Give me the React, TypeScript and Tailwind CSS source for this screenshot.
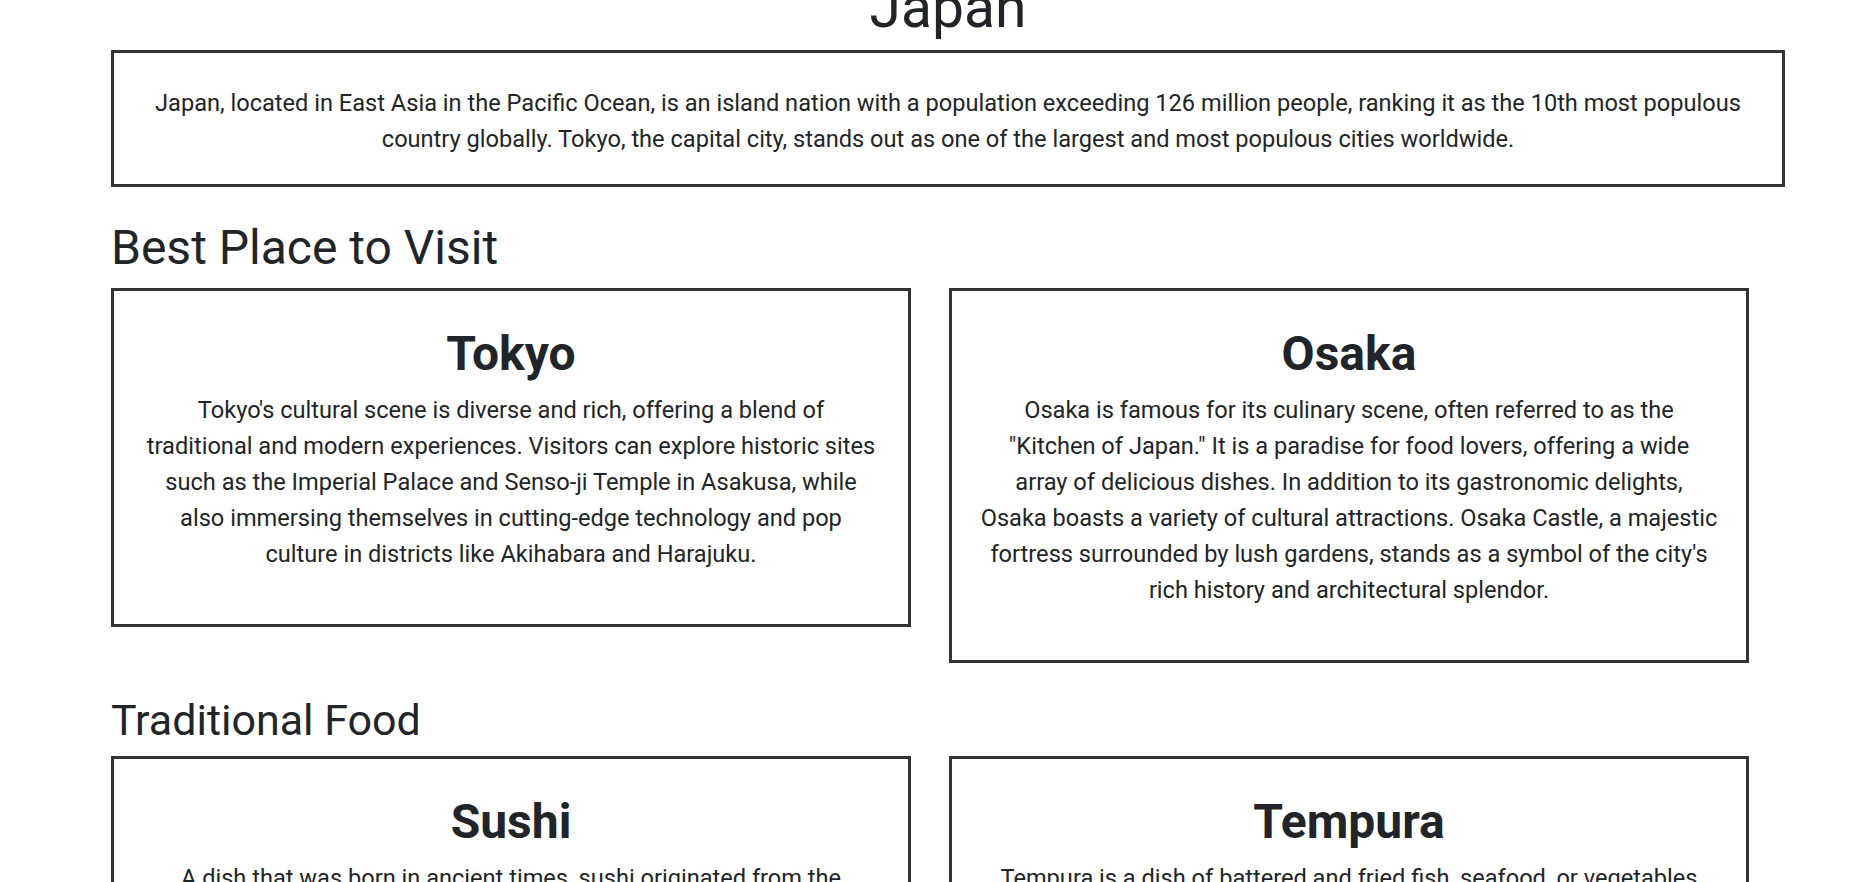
import React from 'react';

interface Item {
  title: string;
  lines: string[];
}

const places: Item[] = [
  {
    title: 'Tokyo',
    lines: [
      "Tokyo's cultural scene is diverse and rich, offering a blend of",
      'traditional and modern experiences. Visitors can explore historic sites',
      'such as the Imperial Palace and Senso-ji Temple in Asakusa, while',
      'also immersing themselves in cutting-edge technology and pop',
      'culture in districts like Akihabara and Harajuku.',
    ],
  },
  {
    title: 'Osaka',
    lines: [
      'Osaka is famous for its culinary scene, often referred to as the',
      '"Kitchen of Japan." It is a paradise for food lovers, offering a wide',
      'array of delicious dishes. In addition to its gastronomic delights,',
      'Osaka boasts a variety of cultural attractions. Osaka Castle, a majestic',
      "fortress surrounded by lush gardens, stands as a symbol of the city's",
      'rich history and architectural splendor.',
    ],
  },
];

const foods: Item[] = [
  {
    title: 'Sushi',
    lines: [
      'A dish that was born in ancient times, sushi originated from the',
      'practice of preserving fish in fermented rice. Today it is enjoyed',
      'all over the world in many forms, from nigiri to maki rolls.',
    ],
  },
  {
    title: 'Tempura',
    lines: [
      'Tempura is a dish of battered and fried fish, seafood, or vegetables',
      'that have been dipped in a light batter and deep fried. It was brought',
      'to Japan by Portuguese traders in the 16th century.',
    ],
  },
];

const Card: React.FC<{ item: Item }> = ({ item }) => (
  <div className="w-[800px] shrink-0 border-[3px] border-[#333] px-[24px] pt-[34px] pb-[52px] text-center">
    <h3 className="text-[48px] font-bold leading-[58px] mb-[9px]">{item.title}</h3>
    <p className="text-[23.6px] leading-[36px]">
      {item.lines.map((line, i) => (
        <React.Fragment key={i}>
          {i > 0 && <br />}
          {line}
        </React.Fragment>
      ))}
    </p>
  </div>
);

const Section: React.FC<{ heading: string; items: Item[]; size: string }> = ({ heading, items, size }) => (
  <section>
    <h2 className={size}>{heading}</h2>
    <div className="flex items-start gap-[38px]">
      {items.map((item) => (
        <Card key={item.title} item={item} />
      ))}
    </div>
  </section>
);

export default function App() {
  return (
    <div
      className="min-h-screen overflow-hidden bg-white text-[#212529]"
      style={{ fontFamily: '"Segoe UI", Roboto, "Noto Sans", "Liberation Sans", sans-serif' }}
    >
      <div className="pl-[111px] pr-[89px]">
        <h1 className="text-[57px] leading-[70px] text-center -mt-[27px] mb-[7px]">Japan</h1>
        <div className="border-[3px] border-[#333] px-[30px] pt-[32px] pb-[27px] text-center text-[23.6px] leading-[36px]">
          Japan, located in East Asia in the Pacific Ocean, is an island nation with a population exceeding 126
          million people, ranking it as the 10th most populous country globally. Tokyo, the capital city, stands out
          as one of the largest and most populous cities worldwide.
        </div>
        <div className="mt-[33px]">
          <Section heading="Best Place to Visit" items={places} size="text-[48px] leading-[56px] mb-[12px]" />
        </div>
        <div className="mt-[31px]">
          <Section heading="Traditional Food" items={foods} size="text-[43px] leading-[52px] mb-[10px]" />
        </div>
      </div>
    </div>
  );
}
